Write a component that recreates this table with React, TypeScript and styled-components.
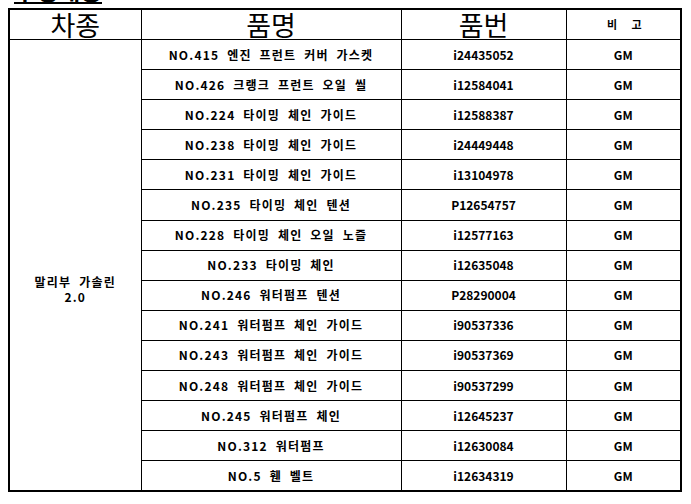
import React from "react";
import styled, { createGlobalStyle } from "styled-components";

const GlobalStyle = createGlobalStyle`
  html, body {
    margin: 0;
    padding: 0;
    background: #ffffff;
    overflow: hidden;
  }
  body {
    font-family: "Noto Sans CJK KR", "Noto Sans", sans-serif;
    color: #000;
  }
`;

const Page = styled.div`
  padding-left: 8px;
  width: 691px;
  height: 504px;
  box-sizing: border-box;
  overflow: hidden;
`;

const Title = styled.div`
  height: 8px;
  overflow: hidden;
`;

const TitleText = styled.div`
  width: fit-content;
  margin-top: -22px;
  margin-left: 6px;
  font-size: 24px;
  font-weight: 700;
  line-height: 24px;
  letter-spacing: 0px;
  border-bottom: 2px solid #000;
`;

const Table = styled.table`
  border-collapse: collapse;
  table-layout: fixed;
  width: 672px;
  border: 2px solid #000;
`;

const HeadCell = styled.th<{ $small?: boolean }>`
  border: 1px solid #000;
  border-top: 2px solid #000;
  height: 29px;
  padding: 0;
  text-align: center;
  vertical-align: middle;
  font-weight: ${(p) => (p.$small ? 700 : 400)};
  font-size: ${(p) => (p.$small ? "11px" : "27px")};
  letter-spacing: ${(p) => (p.$small ? "6px" : "0")};
  text-indent: ${(p) => (p.$small ? "8px" : "0")};
  line-height: 1;
`;

const Cell = styled.td<{ $spaced?: boolean }>`
  border: 1px solid #000;
  height: 29.1px;
  padding: 0;
  text-align: center;
  vertical-align: middle;
  font-size: 12px;
  font-weight: 700;
  line-height: 1;
  white-space: nowrap;
  letter-spacing: ${(p) => (p.$spaced ? "1.2px" : "0")};
  word-spacing: ${(p) => (p.$spaced ? "4px" : "0")};
`;

const ModelCell = styled(Cell)`
  white-space: normal;
  line-height: 15px;
  padding-top: 48px;
`;

const rows: [string, string][] = [
  ["NO.415 엔진 프런트 커버 가스켓", "i24435052"],
  ["NO.426 크랭크 프런트 오일 씰", "i12584041"],
  ["NO.224 타이밍 체인 가이드", "i12588387"],
  ["NO.238 타이밍 체인 가이드", "i24449448"],
  ["NO.231 타이밍 체인 가이드", "i13104978"],
  ["NO.235 타이밍 체인 텐션", "P12654757"],
  ["NO.228 타이밍 체인 오일 노즐", "i12577163"],
  ["NO.233 타이밍 체인", "i12635048"],
  ["NO.246 워터펌프 텐션", "P28290004"],
  ["NO.241 워터펌프 체인 가이드", "i90537336"],
  ["NO.243 워터펌프 체인 가이드", "i90537369"],
  ["NO.248 워터펌프 체인 가이드", "i90537299"],
  ["NO.245 워터펌프 체인", "i12645237"],
  ["NO.312 워터펌프", "i12630084"],
  ["NO.5 휀 벨트", "i12634319"],
];

export default function App() {
  return (
    <Page>
      <GlobalStyle />
      <Title>
        <TitleText>구성내용</TitleText>
      </Title>
      <Table>
        <colgroup>
          <col style={{ width: 132 }} />
          <col style={{ width: 260 }} />
          <col style={{ width: 165 }} />
          <col style={{ width: 115 }} />
        </colgroup>
        <thead>
          <tr>
            <HeadCell>차종</HeadCell>
            <HeadCell>품명</HeadCell>
            <HeadCell>품번</HeadCell>
            <HeadCell $small>비 고</HeadCell>
          </tr>
        </thead>
        <tbody>
          {rows.map(([name, code], i) => (
            <tr key={code}>
              {i === 0 && (
                <ModelCell $spaced rowSpan={rows.length}>
                  말리부 가솔린
                  <br />
                  2.0
                </ModelCell>
              )}
              <Cell $spaced>{name}</Cell>
              <Cell>{code}</Cell>
              <Cell>GM</Cell>
            </tr>
          ))}
        </tbody>
      </Table>
    </Page>
  );
}
